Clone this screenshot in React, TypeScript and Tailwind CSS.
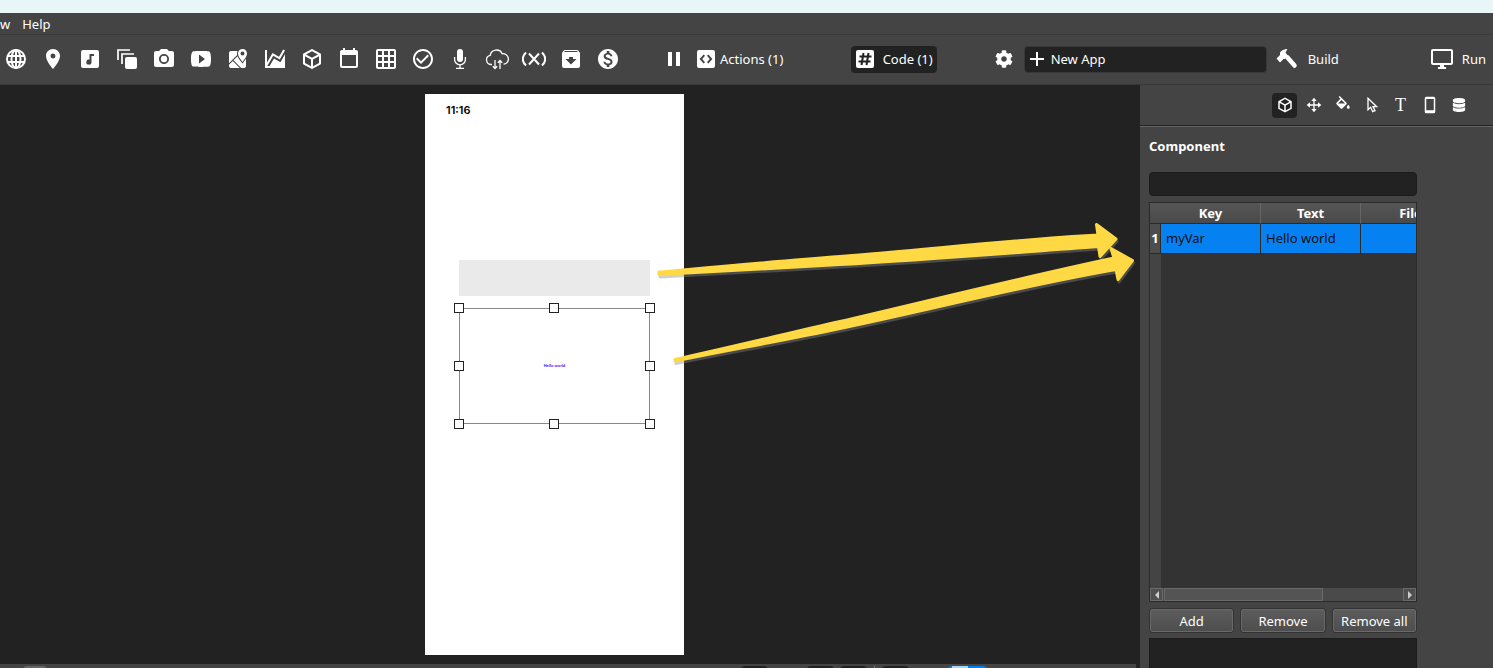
import React from "react";
import clsx from "clsx";
import {
  MdPlace,
  MdPhotoCamera,
  MdGridOn,
  MdCheckCircleOutline,
  MdArchive,
  MdMonetizationOn,
  MdPause,
  MdAdd,
  MdOutlineDesktopWindows,
} from "react-icons/md";
import { FaCog, FaDatabase } from "react-icons/fa";

const CUBE =
  "M21,16.5C21,16.88 20.79,17.21 20.47,17.38L12.57,21.82C12.41,21.94 12.21,22 12,22C11.79,22 11.59,21.94 11.43,21.82L3.53,17.38C3.21,17.21 3,16.88 3,16.5V7.5C3,7.12 3.21,6.79 3.53,6.62L11.43,2.18C11.59,2.06 11.79,2 12,2C12.21,2 12.41,2.06 12.57,2.18L20.47,6.62C20.79,6.79 21,7.12 21,7.5V16.5M12,4.15L6.04,7.5L12,10.85L17.96,7.5L12,4.15M5,15.91L11,19.29V12.58L5,9.21V15.91M19,15.91V9.21L13,12.58V19.29L19,15.91Z";
const VIDEO =
  "M10,16.5V7.5L16,12M20,4.4C19.4,4.2 15.7,4 12,4C8.3,4 4.6,4.19 4,4.38C2.44,4.9 2,8.4 2,12C2,15.59 2.44,19.1 4,19.61C4.6,19.81 8.3,20 12,20C15.7,20 19.4,19.81 20,19.61C21.56,19.1 22,15.59 22,12C22,8.4 21.56,4.91 20,4.4Z";
const MAP =
  "M5,4A2,2 0 0,0 3,6V16.29L11.18,8.11C11.06,7.59 11,7.07 11,6.53C11,5.62 11.2,4.76 11.59,4H5M18,21A2,2 0 0,0 20,19V11.86C19.24,13 18.31,14.21 17.29,15.5L16.5,16.5L15.72,15.5C14.39,13.85 13.22,12.32 12.39,10.91C12.05,10.33 11.76,9.76 11.53,9.18L7.46,13.25L15.21,21H18M3,19A2,2 0 0,0 5,21H13.79L6.75,13.96L3,17.71V19M16.5,15C19.11,11.63 21,9.1 21,6.57C21,4.05 19,2 16.5,2C14,2 12,4.05 12,6.57C12,9.1 13.87,11.63 16.5,15M18.5,6.5A2,2 0 0,1 16.5,8.5A2,2 0 0,1 14.5,6.5A2,2 0 0,1 16.5,4.5A2,2 0 0,1 18.5,6.5Z";
const CHART =
  "M17.45,15.18L22,7.31V19L22,21H2V3H4V15.54L9.5,6L16,9.78L20.24,2.45L21.97,3.45L16.74,12.5L10.23,8.75L4.31,19H6.57L10.96,11.44L17.45,15.18Z";
const CALENDAR =
  "M19,19H5V8H19M16,1V3H8V1H6V3H5C3.89,3 3,3.89 3,5V19A2,2 0 0,0 5,21H19A2,2 0 0,0 21,19V5C21,3.89 20.1,3 19,3H18V1";
const MUSIC =
  "M5,3H19A2,2 0 0,1 21,5V19A2,2 0 0,1 19,21H5A2,2 0 0,1 3,19V5A2,2 0 0,1 5,3M16,7H11.5V12.5A2.6,2.6 0 1,0 13.5,15V9H16V7Z";
const CODE_BOX =
  "M5,3H19A2,2 0 0,1 21,5V19A2,2 0 0,1 19,21H5A2,2 0 0,1 3,19V5A2,2 0 0,1 5,3M11,8.8L9.6,7.4L5.6,12L9.6,16.6L11,15.2L8.2,12L11,8.8M13,8.8L15.8,12L13,15.2L14.4,16.6L18.4,12L14.4,7.4L13,8.8Z";
const BUCKET =
  "M19,11.5C19,11.5 17,13.67 17,15A2,2 0 0,0 19,17A2,2 0 0,0 21,15C21,13.67 19,11.5 19,11.5M5.21,10L10,5.21L14.79,10M16.56,8.94L7.62,0L6.21,1.41L8.59,3.79L3.44,8.94C2.85,9.5 2.85,10.47 3.44,11.06L8.94,16.56C9.23,16.85 9.62,17 10,17C10.38,17 10.77,16.85 11.06,16.56L16.56,11.06C17.15,10.47 17.15,9.5 16.56,8.94Z";
const DEVICE = "M7 1h10a2 2 0 0 1 2 2v18a2 2 0 0 1-2 2H7a2 2 0 0 1-2-2V3a2 2 0 0 1 2-2zM7 4v15h10V4z";
const ARROW_TOP =
  "M4 62C60 57 125 51 185 46.500C270 40 360 29.500 443 25L441.500 14.500 461 29 445 46.500 443.500 36.500C360 42.500 270 50 185 54.500C125 58 60 61.500 4 64.500Z";
const ARROW_BOTTOM =
  "M20 149.500C75 137.500 130 124 185 111.500C275 90.500 365 68 459 48L456 38.500 477.500 50.500 463 69.500 461 59.500C365 76 275 100 185 118.500C130 130 75 140 20 151Z";

type PathProps = { d: string; className?: string };

const Path: React.FC<PathProps> = ({ d, className = "size-6" }) => (
  <svg viewBox="0 0 24 24" className={className} fill="currentColor" fillRule="evenodd">
    <path d={d} />
  </svg>
);

type LineProps = { children: React.ReactNode; width?: number; className?: string };

const Line: React.FC<LineProps> = ({ children, width = 2, className = "size-6" }) => (
  <svg viewBox="0 0 24 24" className={className} fill="none" stroke="currentColor" strokeWidth={width}>
    {children}
  </svg>
);

const Label: React.FC<{ children: React.ReactNode }> = ({ children }) => (
  <span className="pt-[2px]">{children}</span>
);

const tools = [
  {
    name: "Web view",
    icon: (
      <Line>
        <circle cx="12" cy="12" r="9" />
        <ellipse cx="12" cy="12" rx="4.5" ry="9" />
        <path d="M12 3v18M3.500 9h17M3.500 15h17" />
      </Line>
    ),
  },
  { name: "Location", icon: <MdPlace className="size-6" /> },
  { name: "Audio", icon: <Path d={MUSIC} /> },
  {
    name: "Stack",
    icon: (
      <Line width={1.7}>
        <path d="M3 13V3h12M7 17V7h12" />
        <rect x="10" y="10" width="12" height="12" rx="2" fill="currentColor" stroke="none" />
      </Line>
    ),
  },
  { name: "Camera", icon: <MdPhotoCamera className="size-6" /> },
  { name: "Video", icon: <Path d={VIDEO} /> },
  { name: "Map", icon: <Path d={MAP} /> },
  { name: "Chart", icon: <Path d={CHART} /> },
  { name: "Component", icon: <Path d={CUBE} /> },
  { name: "Calendar", icon: <Path d={CALENDAR} /> },
  { name: "Grid", icon: <MdGridOn className="size-6" /> },
  { name: "Check", icon: <MdCheckCircleOutline className="size-6" /> },
  {
    name: "Microphone",
    icon: (
      <Line width={1.3}>
        <rect x="9" y="2" width="6" height="13" rx="3" fill="currentColor" stroke="none" />
        <path d="M6.600 10v2.500a5.400 5.400 0 0 0 10.800 0V10M12 18v3M8 21.400h8" />
      </Line>
    ),
  },
  {
    name: "Cloud sync",
    icon: (
      <Line width={1.3}>
        <path d="M7 17.500H6A4.600 4.600 0 0 1 5.200 8.400A6.300 6.300 0 0 1 17.200 6.800A5.200 5.200 0 0 1 19 17.200H18.500" />
        <path d="M10 13v8.500M7.800 19.300l2.200 2.200 2.200-2.200M15 22v-8.500M12.800 15.700l2.200-2.200 2.200 2.200" />
      </Line>
    ),
  },
  {
    name: "Variable",
    icon: (
      <Line>
        <path d="M4 5.500C-0.300 9.500-0.300 14.500 4 18.500M20 5.500C24.300 9.500 24.300 14.500 20 18.500" />
        <path d="M7 6.500L17 17.500M17 6.500L7 17.500" />
      </Line>
    ),
  },
  { name: "Archive", icon: <MdArchive className="size-6" /> },
  { name: "Payment", icon: <MdMonetizationOn className="size-6" /> },
];

const panelTabs = [
  { name: "Component", icon: <Path d={CUBE} className="size-[18px]" /> },
  {
    name: "Layout",
    icon: (
      <Line className="size-4">
        <path d="M12 3v18M3 12h18" />
        <path fill="currentColor" stroke="none" d="M12 1l4 5H8zM12 23l4-5H8zM1 12l5-4v8zM23 12l-5-4v8z" />
      </Line>
    ),
  },
  { name: "Fill", icon: <Path d={BUCKET} className="size-[18px]" /> },
  {
    name: "Pointer",
    icon: (
      <Line className="size-4">
        <path d="M6 2v17l4-3.500 3 6.500 3.500-1.500-3-6H19z" />
      </Line>
    ),
  },
  { name: "Text", icon: <span className="font-['Liberation_Serif',serif] text-lg leading-4">T</span> },
  { name: "Device", icon: <Path d={DEVICE} className="size-[18px]" /> },
  { name: "Data", icon: <FaDatabase className="size-[14px]" /> },
];

const handles = [
  "-left-[6px] -top-[6px]",
  "left-[89px] -top-[6px]",
  "-right-[6px] -top-[6px]",
  "-left-[6px] top-[52px]",
  "-right-[6px] top-[52px]",
  "-left-[6px] -bottom-[6px]",
  "left-[89px] -bottom-[6px]",
  "-right-[6px] -bottom-[6px]",
];

const Toolbar: React.FC = () => {
  return (
    <div className="flex h-[50px] shrink-0 items-center border-b border-[#383838] pr-[7px] pb-px pl-1 whitespace-nowrap">
      <div className="flex gap-[13px]">
        {tools.map((tool) => (
          <button key={tool.name} type="button" aria-label={tool.name} className="size-6">
            {tool.icon}
          </button>
        ))}
      </div>
      <button type="button" aria-label="Pause" className="ml-[42px]">
        <MdPause className="size-6" />
      </button>
      <button type="button" className="ml-2 flex items-center gap-[2px]">
        <Path d={CODE_BOX} />
        <Label>Actions (1)</Label>
      </button>
      <button
        type="button"
        className="mr-4 ml-auto flex h-[27px] w-[86px] items-center gap-[6px] rounded bg-[#222] pl-[2px]"
      >
        <svg viewBox="0 0 24 24" className="size-6 shrink-0">
          <rect x="3" y="3" width="18" height="18" rx="2" fill="#fff" />
          <path
            d="M10.500 6 8.500 18M15.500 6 13.500 18M6.500 9.500h12M5.500 14.500h12"
            stroke="#222"
            strokeWidth="2"
          />
        </svg>
        <Label>Code (1)</Label>
      </button>
      <button type="button" aria-label="Settings" className="ml-[42px]">
        <FaCog className="size-[18px]" />
      </button>
      <button
        type="button"
        className="ml-[11px] flex h-[27px] w-[243px] items-center gap-[2px] rounded border border-[#383838] bg-[#222]"
      >
        <MdAdd className="size-6" />
        <Label>New App</Label>
      </button>
      <button type="button" className="ml-2 flex items-center gap-[9px]">
        <svg viewBox="0 0 24 24" className="size-6" fill="currentColor">
          <path d="M12.500 2C9 2 6.500 3.500 5 5.500V8L1.500 11.500 5 15.500 8.500 12 10 12 13 9 10.500 5.500Z" />
          <path d="M12.500 10.500L19.500 18.500" stroke="currentColor" strokeWidth="4.500" strokeLinecap="round" />
        </svg>
        <Label>Build</Label>
      </button>
      <button type="button" className="ml-[91px] flex items-center gap-2">
        <MdOutlineDesktopWindows className="size-6" />
        <Label>Run</Label>
      </button>
    </div>
  );
};

const Canvas: React.FC = () => {
  return (
    <div className="flex min-w-0 flex-1 flex-col bg-[#222]">
      <div className="relative flex flex-1 justify-center py-[9px] pr-[31px]">
        <div className="flex w-[259px] flex-col bg-white px-[34px] font-['Inter',sans-serif] text-black">
          <p className="-ml-[13px] h-[166px] pt-2 text-[11px] leading-4 font-semibold">11:16</p>
          <div className="h-9 bg-[#eaeaea]" />
          <div className="relative mt-3 flex h-[116px] items-center justify-center border border-[#888]">
            <span className="font-['Liberation_Sans',sans-serif] text-[4px] font-bold text-[#3a10f0]">
              Hello world
            </span>
            {handles.map((pos) => (
              <i key={pos} className={clsx("absolute size-[10px] border border-[#222] bg-white", pos)} />
            ))}
          </div>
        </div>
        <svg
          viewBox="0 0 485 160"
          className="pointer-events-none absolute top-[125px] right-0 h-[160px] w-[485px]"
          strokeWidth="3"
          strokeLinejoin="round"
        >
          <g fill="#888" stroke="#888" opacity=".4" transform="translate(1 2.500)">
            <path d={ARROW_BOTTOM} />
            <path d={ARROW_TOP} />
          </g>
          <g fill="#ffd944" stroke="#ffd944">
            <path d={ARROW_BOTTOM} />
            <path d={ARROW_TOP} />
          </g>
        </svg>
      </div>
      <div className="mr-1 flex h-1 items-start overflow-hidden bg-[#444] pt-[2px] pl-[23px]">
        <button type="button" aria-label="Layers" className="h-5 w-6 rounded bg-[#666]" />
        <div className="ml-auto flex pr-[149px]">
          <button type="button" aria-label="Undo" className="h-5 w-[27px] rounded bg-[#222]" />
          <button type="button" aria-label="Zoom out" className="ml-[39px] h-5 w-[27px] rounded bg-[#222]" />
          <button type="button" aria-label="Zoom in" className="ml-[6px] h-5 w-[27px] rounded bg-[#222]" />
          <span className="ml-[7px] h-5 w-px bg-[#777]" />
          <button type="button" aria-label="Fit" className="ml-[7px] h-5 w-[27px] rounded bg-[#222]" />
          <button type="button" aria-label="Preview" className="ml-[39px] h-5 w-[39px] rounded bg-[#0480ee] pr-4">
            <span className="mx-auto block h-5 w-4 bg-[#a8d4fa]" />
          </button>
        </div>
      </div>
    </div>
  );
};

const headCell =
  "h-[21px] overflow-hidden border-r border-b border-r-[#666] border-b-[#2a2a2a] bg-linear-to-b from-[#565656] to-[#4a4a4a] p-0 text-center leading-5 font-bold";
const bodyCell = "h-[30px] border-r border-b border-[#2a2a2a] bg-[#0581f1] p-0 pl-[5px] text-[#101010]";
const panelButton =
  "h-[23px] rounded-xs border border-[#696969] bg-linear-to-b from-[#5c5c5c] to-[#4e4e4e] leading-5 outline outline-[#333]";
const scrollButton =
  "flex w-[13px] items-center justify-center border border-[#6a6a6a] bg-[#4f4f4f] text-[#ccc]";

const Panel: React.FC = () => {
  return (
    <aside className="flex w-[353px] shrink-0 flex-col">
      <div className="flex h-[41px] shrink-0 items-center justify-end gap-1 border-b border-[#222] pr-[22px]">
        {panelTabs.map((tab, i) => (
          <button
            key={tab.name}
            type="button"
            aria-label={tab.name}
            className={clsx("flex size-[25px] items-center justify-center rounded-sm", i === 0 && "bg-[#222]")}
          >
            {tab.icon}
          </button>
        ))}
      </div>
      <div className="flex min-h-0 flex-1 flex-col border-t border-[#666] pt-[9px] pl-[9px]">
        <h2 className="leading-5 font-bold">
          <label htmlFor="component">Component</label>
        </h2>
        <input
          id="component"
          className="mt-4 h-6 w-[268px] shrink-0 rounded-sm border border-[#1b1b1b] bg-[#222] px-1"
        />
        <div className="mt-[6px] flex w-[268px] min-h-0 flex-1 flex-col overflow-hidden border border-[#2a2a2a] bg-[#333]">
          <table className="w-[311px] table-fixed border-separate border-spacing-0">
            <colgroup>
              <col className="w-[11px]" />
              <col className="w-[100px]" />
              <col className="w-[100px]" />
              <col className="w-[100px]" />
            </colgroup>
            <thead>
              <tr>
                <td className="h-[21px] border-b border-[#2a2a2a] bg-linear-to-b from-[#565656] to-[#4a4a4a] p-0" />
                <th className={headCell}>Key</th>
                <th className={headCell}>Text</th>
                <th className={headCell}>File</th>
              </tr>
            </thead>
            <tbody>
              <tr>
                <th className="h-[30px] border-r border-b border-[#2a2a2a] bg-[#4d4d4d] p-0 text-center font-bold">
                  1
                </th>
                <td className={bodyCell}>myVar</td>
                <td className={bodyCell}>Hello world</td>
                <td className={bodyCell} />
              </tr>
            </tbody>
          </table>
          <div className="w-[11px] flex-1 bg-[#444]" />
          <div className="flex h-[13px] gap-px bg-[#4a4a4a]">
            <button type="button" aria-label="Scroll left" className={scrollButton}>
              <svg viewBox="0 0 4 8" className="h-2 w-1" fill="currentColor">
                <path d="M4 0v8L0 4z" />
              </svg>
            </button>
            <div className="w-[159px] border border-[#6a6a6a] bg-[#545454]" />
            <button type="button" aria-label="Scroll right" className={clsx(scrollButton, "ml-auto")}>
              <svg viewBox="0 0 4 8" className="h-2 w-1" fill="currentColor">
                <path d="M0 0v8l4-4z" />
              </svg>
            </button>
          </div>
        </div>
        <div className="mt-[7px] grid w-[268px] shrink-0 grid-cols-3 gap-2 px-px">
          <button type="button" className={panelButton}>
            Add
          </button>
          <button type="button" className={panelButton}>
            Remove
          </button>
          <button type="button" className={panelButton}>
            Remove all
          </button>
        </div>
        <textarea
          aria-label="Value"
          className="mt-[6px] h-[30px] w-[268px] shrink-0 resize-none border border-b-0 border-[#1b1b1b] bg-[#222]"
        />
      </div>
    </aside>
  );
};

const App: React.FC = () => {
  return (
    <div className="flex h-screen flex-col overflow-hidden bg-[#444] font-['Noto_Sans',sans-serif] text-[13px] text-white">
      <div className="h-[13px] shrink-0 bg-[#e8f6f7]" />
      <nav className="flex h-[22px] shrink-0 items-center gap-3 border-b border-[#3a3a3a] pt-[2px]">
        <button type="button">w</button>
        <button type="button">Help</button>
      </nav>
      <Toolbar />
      <div className="flex min-h-0 flex-1">
        <Canvas />
        <Panel />
      </div>
    </div>
  );
};

export default App;
